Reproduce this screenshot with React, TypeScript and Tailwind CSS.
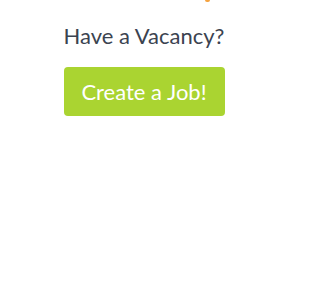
export default function App() {
  return (
    <div className="w-[288px] h-[288px] bg-white font-['Lato',sans-serif]">
      <div className="ml-[205px] w-[5px] h-[2px] rounded-b-full bg-[#f5a340]" />
      <div className="flex flex-col items-center pt-[21px]">
        <h2 className="text-[22px] leading-[26px] text-[#3b4350]">Have a Vacancy?</h2>
        <button className="mt-[18px] h-[49px] w-[161px] rounded-[4px] bg-[#aad431] pt-[1px] text-[22px] leading-[26px] text-white">
          Create a Job!
        </button>
      </div>
    </div>
  );
}
